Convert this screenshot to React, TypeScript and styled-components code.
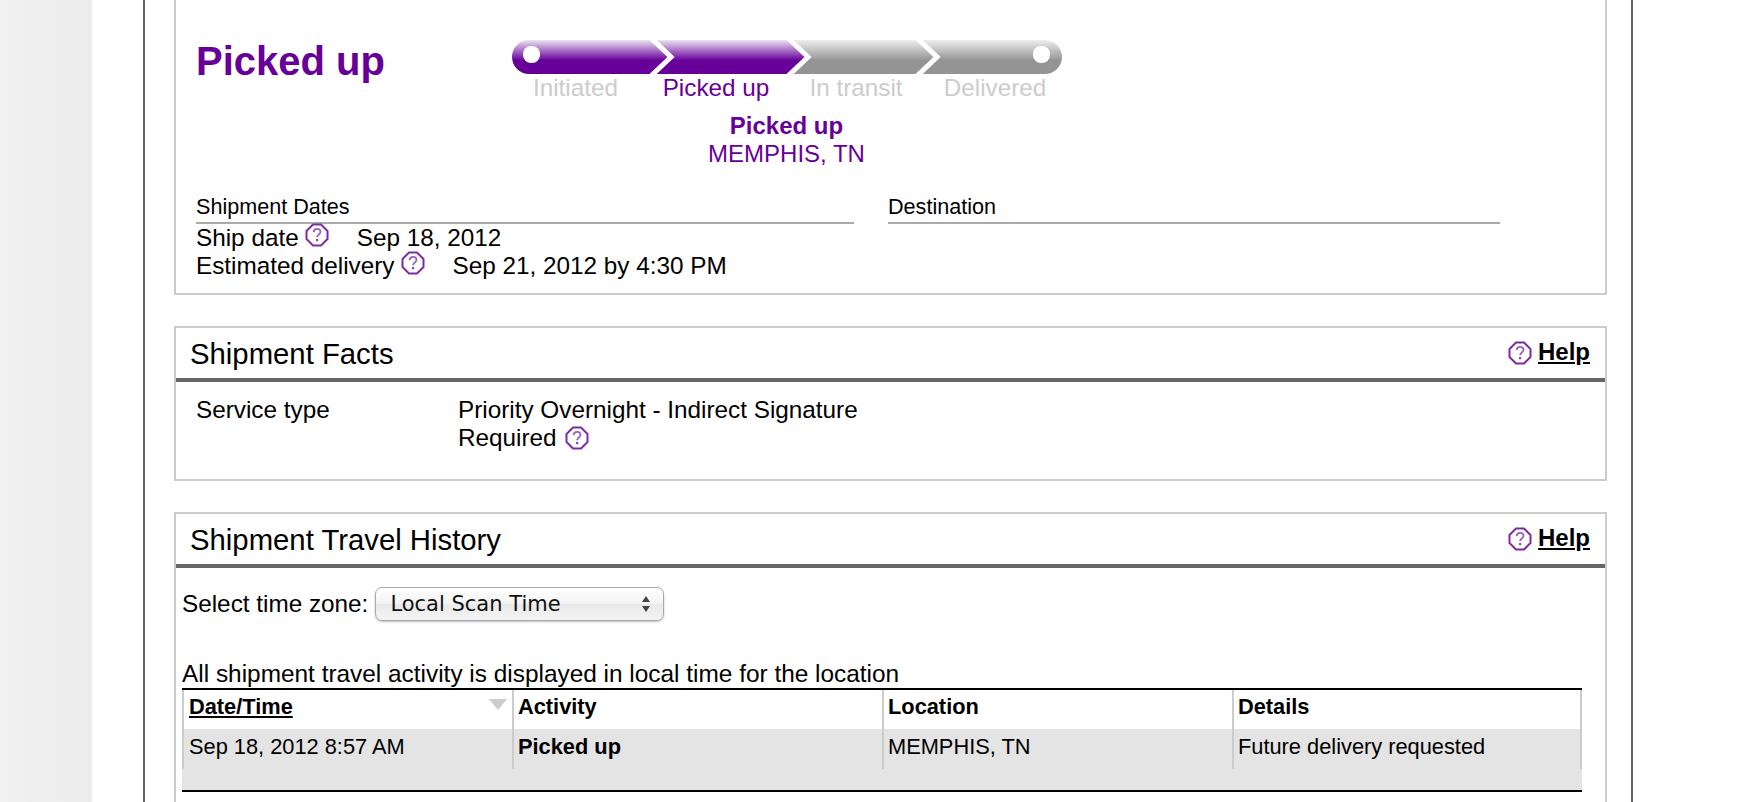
import React from "react";
import styled, { createGlobalStyle } from "styled-components";

const Global = createGlobalStyle`
  html, body { margin: 0; padding: 0; background: #fff; height: 802px; overflow: hidden; }
  body { font-family: "Liberation Sans", Arial, sans-serif; color: #000; }
`;
const Page = styled.div`display: flex; height: 802px; overflow: hidden; background: #fff;`;
const Gutter = styled.div`flex: 0 0 92px; background: linear-gradient(to right, #f1f1f1, #ececec);`;
const Frame = styled.main`
  width: 1490px; box-sizing: border-box; margin-left: 51px;
  border-left: 2px solid #666; border-right: 2px solid #666;
  padding-left: 29px; display: flex; flex-direction: column; gap: 31px; height: 802px; overflow: hidden;
`;
const Card = styled.section<{ $open?: boolean }>`
  width: 1433px; box-sizing: border-box; flex: none;
  border: 2px solid #ccc; ${(p) => (p.$open ? "border-top: none; padding-bottom: 13px;" : "")}
`;
const Summary = styled.div`display: flex; padding: 40px 0 0 20px;`;
const Title = styled.h1`
  margin: -1px 0 0; flex: 0 0 316px; font-size: 40px; line-height: 44px; font-weight: bold; color: #660099;
`;
const Progress = styled.div`flex: 0 0 550px; display: flex; flex-direction: column;`;
const Labels = styled.div`display: grid; grid-template-columns: 127px 154px 126px 152px; margin-top: 0; margin-right: -9px;`;
const Label = styled.span<{ $on?: boolean }>`
  font-size: 24.3px; line-height: 28px; text-align: center; white-space: nowrap; color: ${(p) => (p.$on ? "#660099" : "#ccc")};
`;
const Status = styled.div`
  margin: 10px 0 1px -1px; width: 551px; text-align: center; color: #660099; font-size: 24px; line-height: 28px;
  & strong { display: block; font-weight: bold; }
`;
const Dates = styled.div`display: flex; gap: 34px; padding: 25px 0 0 20px;`;
const DateCol = styled.div<{ $w: number }>`flex: 0 0 ${(p) => p.$w}px;`;
const DateHead = styled.div`
  font-size: 21.6px; line-height: 26px; height: 28px; border-bottom: 2px solid #aaa; white-space: nowrap;
`;
const DateRow = styled.div`font-size: 24.3px; line-height: 28px; white-space: nowrap; display: flex; align-items: center; height: 28px;`;
const DateValue = styled.span`margin-left: 28px;`;
const Badge = styled.svg`width: 24px; height: 24px; margin-left: 6px; flex: none; position: relative; top: -3px;`;
const BadgeInline = styled(Badge)`display: inline-block; vertical-align: middle; margin-left: 2px; top: -2px;`;
const CardHead = styled.header`
  display: flex; align-items: center; justify-content: space-between; height: 50px; box-sizing: content-box;
  border-bottom: 4px solid #666; padding: 0 15px 0 14px;
`;
const CardTitle = styled.h2`margin: 2px 0 0; font-size: 29.3px; line-height: 50px; font-weight: normal; white-space: nowrap;`;
const HelpLink = styled.a`
  display: flex; align-items: center; padding-bottom: 2px; font-size: 24px; line-height: 28px; font-weight: bold; color: #000; text-decoration: underline;
  & svg { margin: 2px 6px 0 0; top: 0; }
`;
const Facts = styled.div`display: flex; padding: 14px 0 27px 20px; font-size: 24.3px; line-height: 28px;`;
const FactLabel = styled.div`flex: 0 0 262px;`;
const FactValue = styled.div`width: 425px;`;
const History = styled.div`padding: 19px 0 60px 6px;`;
const ZoneRow = styled.div`display: flex; align-items: center; height: 34px; font-size: 24.3px; gap: 7px;`;
const Select = styled.div`
  width: 289px; height: 34px; box-sizing: border-box; display: flex; align-items: center; justify-content: space-between;
  padding: 0 12px 0 14px; border: 1px solid #a9a9a9; border-radius: 7px;
  background: linear-gradient(#fff, #f3f3f3 50%, #e9e9e9 52%, #f4f4f4);
  box-shadow: 0 1px 2px rgba(0,0,0,.25);
  font-family: "DejaVu Sans", sans-serif; font-size: 21px; color: #111;
`;
const Arrows = styled.svg`width: 10px; height: 18px;`;
const Note = styled.div`margin-top: 39px; font-size: 24.4px; line-height: 28px; white-space: nowrap;`;
const Table = styled.div`
  width: 1400px; margin-top: 0; border-top: 2px solid #000; border-bottom: 2px solid #000;
  background: linear-gradient(to bottom, #fff 39px, #e4e4e4 39px);
`;
const Row = styled.div<{ $h: number; $lift: number }>`
  display: grid; grid-template-columns: 330px 370px 350px 350px; height: ${(p) => p.$h}px;
  & > div { padding-bottom: ${(p) => p.$lift}px; }
`;
const Cell = styled.div<{ $bold?: boolean }>`
  display: flex; align-items: center; justify-content: space-between; padding: 0 5px 0 4px; border-left: 2px solid #ccc;
  font-size: 21.8px; font-weight: ${(p) => (p.$bold ? "bold" : "normal")}; white-space: nowrap; min-width: 0;
  &:first-child { padding-left: 5px; }
  &:last-child { border-right: 2px solid #ccc; }
`;
const SortLink = styled.a`color: #000; text-decoration: underline;`;
const SortMark = styled.span`
  width: 0; height: 0; border-left: 9px solid transparent; border-right: 9px solid transparent; border-top: 11px solid #ccc;
  margin: 0 0 4px 0;
`;
const TableFoot = styled.div`height: 21px;`;

const HelpIcon = ({ as: C = Badge }: { as?: any }) => (
  <C viewBox="0 0 24 24" aria-hidden>
    <path d="M8 1.5h8L22.5 8v8L16 22.5H8L1.5 16V8z" fill="#fff" stroke="#7b2ca3" strokeWidth="2" strokeLinejoin="round" />
    <path d="M8.6 9.2c.2-2.2 1.7-3.4 3.5-3.4s3.4 1.1 3.4 3c0 2.6-3.4 2.7-3.4 5.4" fill="none" stroke="#9a63bb" strokeWidth="1.8" />
    <rect x="11" y="16" width="2.2" height="2.2" fill="#8a45ad" />
  </C>
);

const T = [159, 296, 425];
const ProgressBar = () => (
  <svg width="550" height="34" viewBox="0 0 550 34" aria-hidden>
    <defs>
      <linearGradient id="p" x1="0" y1="0" x2="0" y2="1">
        <stop offset="0" stopColor="#ece2f2" />
        <stop offset="0.6" stopColor="#660099" />
      </linearGradient>
      <linearGradient id="g" x1="0" y1="0" x2="0" y2="1">
        <stop offset="0" stopColor="#eeeeee" />
        <stop offset="0.6" stopColor="#949494" />
      </linearGradient>
    </defs>
    <path d={`M17 0H${T[1] - 17}L${T[1]} 17L${T[1] - 17} 34H17A17 17 0 0 1 17 0Z`} fill="url(#p)" />
    <path d={`M${T[1] - 17} 0H533A17 17 0 0 1 533 34H${T[1] - 17}L${T[1]} 17Z`} fill="url(#g)" />
    {T.map((t) => (
      <path key={t} d={`M${t - 20} -2L${t} 17L${t - 20} 36`} fill="none" stroke="#fff" strokeWidth="5" />
    ))}
    <rect x="11" y="6" width="17" height="17" rx="8" fill="#fff" />
    <rect x="521" y="6" width="17" height="17" rx="8" fill="#fff" />
  </svg>
);

export default function App() {
  return (
    <Page>
      <Global />
      <Gutter />
      <Frame>
        <Card $open>
          <Summary>
            <Title>Picked up</Title>
            <Progress>
              <ProgressBar />
              <Labels>
                <Label>Initiated</Label>
                <Label $on>Picked up</Label>
                <Label>In transit</Label>
                <Label>Delivered</Label>
              </Labels>
              <Status>
                <strong>Picked up</strong>
                MEMPHIS, TN
              </Status>
            </Progress>
          </Summary>
          <Dates>
            <DateCol $w={658}>
              <DateHead>Shipment Dates</DateHead>
              <DateRow>Ship date<HelpIcon /><DateValue>Sep 18, 2012</DateValue></DateRow>
              <DateRow>Estimated delivery<HelpIcon /><DateValue>Sep 21, 2012 by 4:30 PM</DateValue></DateRow>
            </DateCol>
            <DateCol $w={612}>
              <DateHead>Destination</DateHead>
            </DateCol>
          </Dates>
        </Card>
        <Card>
          <CardHead>
            <CardTitle>Shipment Facts</CardTitle>
            <HelpLink><HelpIcon />Help</HelpLink>
          </CardHead>
          <Facts>
            <FactLabel>Service type</FactLabel>
            <FactValue>Priority Overnight - Indirect Signature Required <HelpIcon as={BadgeInline} /></FactValue>
          </Facts>
        </Card>
        <Card>
          <CardHead>
            <CardTitle>Shipment Travel History</CardTitle>
            <HelpLink><HelpIcon />Help</HelpLink>
          </CardHead>
          <History>
            <ZoneRow>
              Select time zone:
              <Select>
                Local Scan Time
                <Arrows viewBox="0 0 10 18" aria-hidden>
                  <path d="M5 1L9 7H1zM5 17L1 11H9z" fill="#444" />
                </Arrows>
              </Select>
            </ZoneRow>
            <Note>All shipment travel activity is displayed in local time for the location</Note>
            <Table>
              <Row $h={39} $lift={6}>
                <Cell $bold><SortLink>Date/Time</SortLink><SortMark /></Cell>
                <Cell $bold>Activity</Cell>
                <Cell $bold>Location</Cell>
                <Cell $bold>Details</Cell>
              </Row>
              <Row $h={40} $lift={4}>
                <Cell>Sep 18, 2012 8:57 AM</Cell>
                <Cell $bold>Picked up</Cell>
                <Cell>MEMPHIS, TN</Cell>
                <Cell>Future delivery requested</Cell>
              </Row>
              <TableFoot />
            </Table>
          </History>
        </Card>
      </Frame>
    </Page>
  );
}
